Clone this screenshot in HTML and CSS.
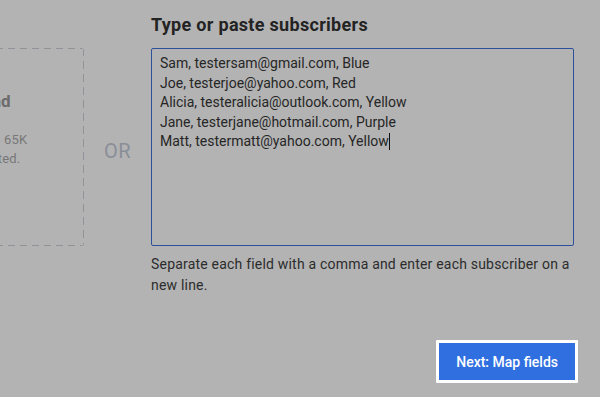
FILE: index.html
```html
<!DOCTYPE html>
<html lang="en">
<head>
  <meta charset="UTF-8" />
  <title>Import subscribers</title>
  <link rel="stylesheet" href="styles.css">
</head>
<body>
  <div class="page">
    <div class="layout">
      <div class="upload-col">
        <div class="dropzone">
          <h3>Drop a file to upload</h3>
          <p>Upload CSV or TXT files up to 65K<br>Subscribers must be formatted.</p>
        </div>
      </div>

      <div class="or">OR</div>

      <div class="paste">
        <h2>Type or paste subscribers</h2>
        <div class="entry">Sam, testersam@gmail.com, Blue<br>Joe, testerjoe@yahoo.com, Red<br>Alicia, testeralicia@outlook.com, Yellow<br>Jane, testerjane@hotmail.com, Purple<br>Matt, testermatt@yahoo.com, Yellow<span class="caret"></span></div>
        <p class="hint">Separate each field with a comma and enter each subscriber on a new line.</p>
      </div>
    </div>

    <div class="actions">
      <button class="next-btn">Next: Map fields</button>
    </div>
  </div>
</body>
</html>
```

FILE: styles.css
```css
* {
  margin: 0;
  padding: 0;
  box-sizing: border-box;
}
html, body {
  width: 100%;
  height: 100%;
  overflow: hidden;
  font-family: Roboto, 'Liberation Sans', sans-serif;
  background: #b3b3b3;
}
.page {
  display: flex;
  flex-direction: column;
  height: 100%;
}
.layout {
  display: flex;
  padding-top: 13px;
}
.upload-col {
  width: 84px;
  flex-shrink: 0;
  padding-top: 35px;
}
/* dashed outline drawn with gradients so the dash length matches */
.dropzone {
  width: 316px;
  height: 198px;
  margin-left: -232px;
  border-radius: 3px;
  padding-top: 42px;
  text-align: center;
  white-space: nowrap;
  background:
    repeating-linear-gradient(90deg, #909398 0 7px, transparent 7px 12px) top / 100% 1px no-repeat,
    repeating-linear-gradient(90deg, #909398 0 7px, transparent 7px 12px) bottom / 100% 1px no-repeat,
    repeating-linear-gradient(180deg, #909398 0 8px, transparent 8px 13px) right / 1px 100% no-repeat;
}
.dropzone h3 {
  font-size: 17px;
  font-weight: 700;
  color: #6b6b6b;
  line-height: 22px;
  word-spacing: 4px;
  margin-bottom: 18px;
}
.dropzone p {
  font-size: 13px;
  line-height: 19px;
  color: #777;
  letter-spacing: 0.2px;
}
.or {
  width: 67px;
  flex-shrink: 0;
  display: flex;
  justify-content: center;
  padding-top: 127px;
  font-size: 20px;
  line-height: 23px;
  letter-spacing: 0.5px;
  color: #8a8e98;
}
.paste {
  width: 423px;
  flex-shrink: 0;
}
.paste h2 {
  font-size: 18px;
  line-height: 24px;
  font-weight: 700;
  color: #232323;
  letter-spacing: 0.3px;
  margin-bottom: 11px;
}
.entry {
  height: 198px;
  border: 1px solid #2e4f9b;
  border-radius: 2px;
  padding: 5px 8px;
  font-size: 14px;
  line-height: 19.5px;
  color: #262626;
}
.caret {
  display: inline-block;
  width: 1px;
  height: 17px;
  background: #111;
  vertical-align: -4px;
}
.hint {
  margin-top: 8px;
  font-size: 14px;
  line-height: 21px;
  color: #2c2c2c;
  letter-spacing: 0.2px;
}
.actions {
  display: flex;
  justify-content: flex-end;
  padding: 0 22px 0 0;
  margin-top: auto;
  margin-bottom: 14px;
}
.next-btn {
  height: 43px;
  padding: 0 17px;
  border: 3px solid #fff;
  background: #2f6fe0;
  color: #fff;
  font-family: Roboto, 'Liberation Sans', sans-serif;
  font-size: 14px;
  font-weight: 500;
  border-radius: 1px;
}
```
